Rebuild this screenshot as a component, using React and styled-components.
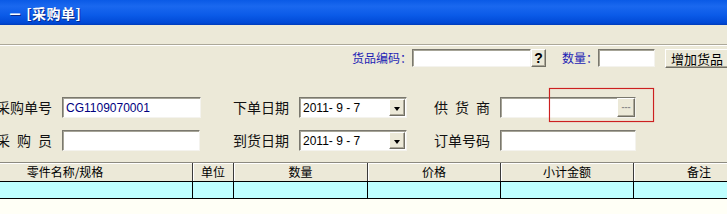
import React from 'react';
import styled, { createGlobalStyle } from 'styled-components';

const GlobalStyle = createGlobalStyle`
  html, body {
    margin: 0;
    padding: 0;
    background: #ece9d8;
  }
  * {
    box-sizing: border-box;
  }
`;

const cjk = `"Noto Sans CJK SC", "Noto Sans", sans-serif`;
const sans = `"Liberation Sans", Arial, sans-serif`;

const Window = styled.div`
  width: 727px;
  height: 214px;
  overflow: hidden;
  display: flex;
  flex-direction: column;
  background: #ece9d8;
  font-family: ${cjk};
`;

const TitleBar = styled.div`
  flex: 0 0 25px;
  display: flex;
  align-items: center;
  padding-left: 8px;
  background: linear-gradient(180deg, #0a5ae6 0%, #1a68ef 25%, #0b5be8 60%, #0049d6 92%, #003bb8 100%);
  color: #fff;
  font-size: 14px;
  font-weight: 700;
  letter-spacing: 0.5px;
  text-shadow: 1px 1px 0 #0a2a8a;
  white-space: nowrap;
`;

const TopGap = styled.div`
  flex: 0 0 19px;
`;

const Separator = styled.div`
  flex: 0 0 2px;
  border-top: 1px solid #aca899;
  border-bottom: 1px solid #fff;
`;

const Toolbar = styled.div`
  flex: 0 0 24px;
  display: flex;
  align-items: center;
  padding-left: 352px;
  white-space: nowrap;
`;

const ToolLabel = styled.span`
  font-size: 12px;
  color: #1c1cb4;
  width: ${p => p.$w}px;
  margin-left: ${p => p.$ml || 0}px;
  line-height: 18px;
`;

const Sunken = styled.div`
  position: relative;
  height: ${p => p.$h || 18}px;
  width: ${p => p.$w}px;
  flex: 0 0 auto;
  background: #fff;
  border-style: solid;
  border-width: 1px;
  border-color: #7a786e #f4f3ee #f4f3ee #7a786e;
  box-shadow: inset 1px 1px 0 #a6a497;
  display: flex;
  align-items: center;
  padding-left: 3px;
  font-family: ${sans};
  font-size: 12px;
  color: ${p => p.$color || '#000'};
`;

const RaisedButton = styled.button`
  flex: 0 0 auto;
  width: ${p => p.$w}px;
  height: ${p => p.$h}px;
  margin-left: ${p => p.$ml || 0}px;
  padding: 0 0 0 ${p => p.$pl || 0}px;
  background: #ece9d8;
  border-style: solid;
  border-width: 1px;
  border-color: #fff #716f64 #716f64 #fff;
  box-shadow: inset -1px -1px 0 #aca899;
  font-family: ${p => p.$font || cjk};
  font-size: ${p => p.$fs || 12}px;
  font-weight: ${p => p.$bold ? 700 : 400};
  color: ${p => p.$color || '#000'};
  display: flex;
  align-items: center;
  justify-content: ${p => p.$pl ? 'flex-start' : 'center'};
  line-height: 1;
  white-space: nowrap;
`;

const InnerButton = styled(RaisedButton)`
  position: absolute;
  right: ${p => p.$off}px;
  top: ${p => p.$off}px;
`;

const Form = styled.div`
  flex: 0 0 auto;
  display: grid;
  grid-template-columns: 237px 201px 1fr;
  row-gap: 12px;
  padding: 27px 0 11px;
  margin-left: -4px;
`;

const Field = styled.div`
  display: flex;
  align-items: center;
  gap: 10px;
  white-space: nowrap;
`;

const FieldLabel = styled.span`
  width: 56px;
  font-size: 14px;
  line-height: 21px;
  color: #111;
  letter-spacing: ${p => p.$spread ? '7px' : '0'};
  white-space: nowrap;
`;

const Triangle = styled.span`
  width: 0;
  height: 0;
  border-left: 3.5px solid transparent;
  border-right: 3.5px solid transparent;
  border-top: 4px solid #000;
  margin-top: 2px;
`;

const Table = styled.div`
  flex: 0 0 auto;
  margin-left: -62px;
  border-top: 1px solid #8c8a80;
  box-shadow: inset 0 1px 0 #fff;
`;

const Row = styled.div`
  display: grid;
  grid-template-columns: 255px 41px 134px 133px 133px 131px;
  height: ${p => p.$h}px;
  background: ${p => p.$bg};
  border-bottom: 1px solid #000;
`;

const HeadCell = styled.div`
  border-right: 1px solid #3a3a3a;
  box-shadow: inset 1px 1px 0 #fff;
  font-size: 12px;
  line-height: 17px;
  text-align: center;
  color: #000;
  white-space: nowrap;
`;

const Cell = styled.div`
  border-right: 1px solid #000;
`;

const Blank = styled.div`
  flex: 1;
  background: #fffff6;
`;

const Frame = styled.div`
  position: relative;
`;

const Highlight = styled.div`
  position: absolute;
  left: 549px;
  top: 88px;
  width: 105px;
  height: 34px;
  border: 1px solid #cc2020;
  box-shadow: 0 0 1px rgba(220, 40, 40, 0.6), inset 0 0 1px rgba(220, 40, 40, 0.6);
  pointer-events: none;
`;

const columns = ['零件名称/规格', '单位', '数量', '价格', '小计金额', '备注'];

function DateCombo({ value }) {
  return (
    <Sunken $w={108} $h={21}>
      {value}
      <InnerButton $w={16} $h={17} $off={1}>
        <Triangle />
      </InnerButton>
    </Sunken>
  );
}

export default function App() {
  return (
    <>
      <GlobalStyle />
      <Frame>
        <Window>
          <TitleBar>－ [采购单]</TitleBar>
          <TopGap />
          <Separator />
          <Toolbar>
            <ToolLabel $w={60}>货品编码：</ToolLabel>
            <Sunken $w={119} />
            <RaisedButton $w={15} $h={18} $bold $fs={14} $font={sans}>?</RaisedButton>
            <ToolLabel $w={36} $ml={16}>数量：</ToolLabel>
            <Sunken $w={57} />
            <RaisedButton $w={72} $h={19} $ml={10} $fs={13} $pl={5}>增加货品</RaisedButton>
          </Toolbar>
          <Form>
            <Field>
              <FieldLabel>采购单号</FieldLabel>
              <Sunken $w={139} $h={21} $color="#000080">CG1109070001</Sunken>
            </Field>
            <Field>
              <FieldLabel>下单日期</FieldLabel>
              <DateCombo value="2011- 9 - 7" />
            </Field>
            <Field>
              <FieldLabel $spread>供货商</FieldLabel>
              <Sunken $w={136} $h={21}>
                <InnerButton $w={18} $h={19} $off={0} $fs={9} $bold $color="#8a8a8a" $font={sans}>---</InnerButton>
              </Sunken>
            </Field>
            <Field>
              <FieldLabel $spread>采购员</FieldLabel>
              <Sunken $w={138} $h={21} />
            </Field>
            <Field>
              <FieldLabel>到货日期</FieldLabel>
              <DateCombo value="2011- 9 - 7" />
            </Field>
            <Field>
              <FieldLabel>订单号码</FieldLabel>
              <Sunken $w={136} $h={21} />
            </Field>
          </Form>
          <Table>
            <Row $h={19} $bg="#ece9d8">
              {columns.map(c => <HeadCell key={c}>{c}</HeadCell>)}
            </Row>
            <Row $h={17} $bg="#bfffff">
              {columns.map(c => <Cell key={c} />)}
            </Row>
          </Table>
          <Blank />
        </Window>
        <Highlight />
      </Frame>
    </>
  );
}
